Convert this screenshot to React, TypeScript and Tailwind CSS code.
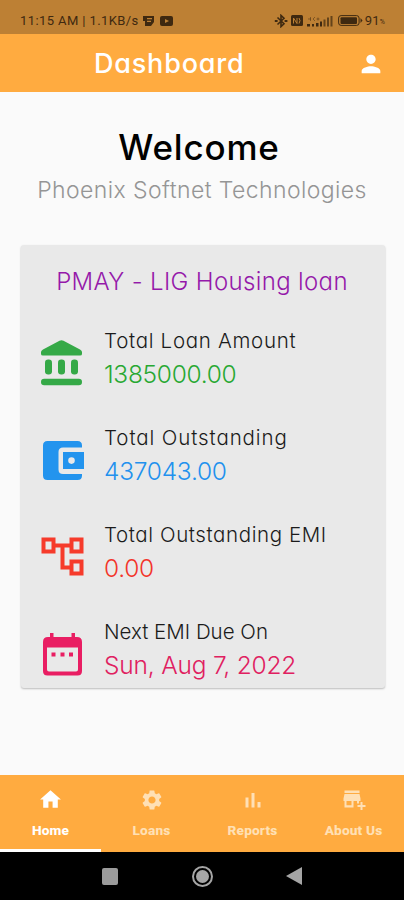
import type { ReactNode } from "react";
import { MdHome, MdPerson, MdSettings } from "react-icons/md";

function BankIcon() {
  return (
    <svg viewBox="0 0 42 46" className="ml-[20px] mt-[15px] h-[46px] w-[42px] shrink-0" fill="#35a947">
      <path d="M0 14V12Q0 10.5 2 9.500L18.500.8Q20.500-.2 22.500.8L39 9.500Q41 10.500 41 12V14Q41 15.500 39 15.500H2Q0 15.500 0 14Z" />
      <rect x="4" y="19.500" width="7" height="15" rx="3.200" />
      <rect x="17" y="19.500" width="7" height="15" rx="3.200" />
      <rect x="30" y="19.500" width="7" height="15" rx="3.200" />
      <rect x="0" y="38.700" width="41" height="6.500" rx="3.200" />
    </svg>
  );
}

function WalletIcon() {
  return (
    <svg viewBox="0 0 42 40" className="ml-[22px] mt-[19px] h-[40px] w-[42px] shrink-0" fill="#2394ee">
      <path d="M4.500 0H34.500Q39 0 39 4.500V6.500H20Q15.500 6.500 15.500 11V28.500Q15.500 33 20 33H39V34.500Q39 39 34.500 39H4.500Q0 39 0 34.500V4.500Q0 0 4.500 0Z" />
      <path fillRule="evenodd" d="M20 11H41V28H20ZM28.500 16.300A3.300 3.300 0 1 0 28.500 22.900A3.300 3.300 0 1 0 28.500 16.300Z" />
    </svg>
  );
}

function TreeIcon() {
  return (
    <svg viewBox="0 0 43 40" className="ml-[20px] mt-[18px] h-[40px] w-[43px] shrink-0" fill="none" stroke="#f63b2b" strokeWidth="4">
      <path d="M2.500 2.500H12.500V14.500H2.500ZM30.500 2.500H40.500V14.500H30.500ZM30.500 24.500H40.500V36.500H30.500Z" />
      <path d="M12.500 8.500H30.500M21.500 8.500V30.500H30.500" />
    </svg>
  );
}

function CalendarIcon() {
  return (
    <svg viewBox="0 0 39 43" className="ml-[22px] mt-[17px] h-[43px] w-[39px] shrink-0" fill="#e91e63">
      <path
        fillRule="evenodd"
        d="M7 0H10.500V4H28.500V0H32V4H34Q39 4 39 9V38Q39 42.500 34.500 42.500H4.500Q0 42.500 0 38V9Q0 4 5 4H7ZM4 14.500V36.500Q4 38.500 6 38.500H33Q35 38.500 35 36.500V14.500Z"
      />
      <path d="M8.500 19.500H12.500V23.500H8.500ZM17.500 19.500H21.500V23.500H17.500ZM26 19.500H30V23.500H26Z" />
    </svg>
  );
}

function StatusBar() {
  return (
    <div className="flex h-[34px] items-center bg-[#bd8034] pl-[20px] pr-[18px] pt-[7px] font-['Roboto',sans-serif] text-[13px] text-[#3f2910]">
      <span className="whitespace-nowrap tracking-[0.4px]">11:15 AM | 1.1KB/s</span>
      <svg viewBox="0 0 12 10" className="ml-[4px] h-[10px] w-[12px]" fill="#3f2910">
        <path fillRule="evenodd" d="M0 0H11V6L8 10H2V5H0ZM4 2V3.200H9V2ZM4 4.700V5.900H8V4.700Z" />
      </svg>
      <svg viewBox="0 0 13 10" className="ml-[5px] h-[10px] w-[13px]">
        <rect width="13" height="10" rx="2" fill="#3f2910" />
        <path d="M5 3L9 5L5 7Z" fill="#bd8034" />
      </svg>
      <div className="ml-auto flex items-center">
        <svg viewBox="0 0 14 14" className="h-[14px] w-[14px]" fill="none" stroke="#3f2910" strokeWidth="1.600">
          <path d="M3.500 3.500L10 9.800L7 12.600V1.400L10 4.200L3.500 10.500" />
          <path d="M.8 7H3.600M10.600 7H13.400" strokeWidth="2.200" />
        </svg>
        <svg viewBox="0 0 12 11" className="ml-[3px] h-[11px] w-[12px]">
          <rect width="12" height="11" rx="1.500" fill="#3f2910" />
          <path d="M2.500 8.500V3L6 8.500V3M8 3Q10 5.500 8 8.500" fill="none" stroke="#bd8034" />
        </svg>
        <svg viewBox="0 0 26 12" className="ml-[4px] h-[12px] w-[26px]" fill="#3f2910">
          <path d="M0 9H3V11.500H0ZM5 9H7V11.500H5ZM9 8H11.500V11.500H9ZM13 6.500H15V11.500H13Z" />
          <path opacity=".7" d="M16.500 4.500H18.500V11.500H16.500ZM20 2.500H22V11.500H20ZM23.500 1H25.500V11.500H23.500Z" />
          <path d="M1 4H4M3.500 2V6M6 4L8 2M6 4L8 6M9.500 4H12.500M11 2.500V5.500" fill="none" stroke="#3f2910" strokeWidth=".8" opacity=".6" />
        </svg>
        <svg viewBox="0 0 25 11" className="ml-[5px] h-[11px] w-[25px]">
          <rect x=".6" y=".6" width="20.500" height="9.800" rx="2.500" fill="none" stroke="#3f2910" strokeWidth="1" />
          <rect x="2.500" y="2.200" width="16.500" height="6.800" rx="1" fill="#3f2910" />
          <path d="M22.500 3V8L24.500 5.500Z" fill="#3f2910" />
        </svg>
        <span className="ml-[2px] text-[13px] leading-none tracking-[0.3px]">91</span>
        <span className="mr-px mt-[4px] text-[7px] leading-none">%</span>
      </div>
    </div>
  );
}

type RowProps = {
  icon: ReactNode;
  label: string;
  value: string;
  labelClass: string;
  valueClass: string;
};

function LoanRow({ icon, label, value, labelClass, valueClass }: RowProps) {
  return (
    <div className="flex h-[97px] items-start">
      <div className="w-[83px] shrink-0">{icon}</div>
      <div className="whitespace-nowrap">
        <p className={`text-[20.5px] leading-[32px] font-light text-[#1b1b1b] ${labelClass}`}>{label}</p>
        <p className={`-mt-px text-[24.5px] leading-[36px] font-light ${valueClass}`}>{value}</p>
      </div>
    </div>
  );
}

function NavItem({ icon, label, active = false }: { icon: ReactNode; label: string; active?: boolean }) {
  return (
    <div
      className={`flex flex-1 flex-col items-center border-b-[3px] pt-[12px] ${
        active ? "border-white text-white" : "border-transparent text-[#ffe0b5]"
      }`}
    >
      <div className="flex h-[25px] items-center">{icon}</div>
      <span className="mt-[9px] whitespace-nowrap text-[13.7px] leading-[18px] font-extrabold tracking-[0.15px]">{label}</span>
    </div>
  );
}

export default function App() {
  return (
    <div className="flex h-[900px] w-[404px] flex-col overflow-hidden bg-[#fafafa] font-['Inter',sans-serif] [font-feature-settings:'cv11']">
      <StatusBar />
      <header className="flex h-[58px] items-center justify-between bg-[#ffab40] pl-[94px] pr-[19px] text-white">
        <h1 className="mt-[2px] text-[27px] font-medium tracking-[0.8px]">Dashboard</h1>
        <MdPerson className="mt-[2px] h-[28px] w-[28px]" />
      </header>

      <main className="flex flex-1 flex-col">
        <h2 className="mt-[31px] pr-[6px] text-center text-[35px] leading-[48px] font-medium tracking-[0.8px] text-black">Welcome</h2>
        <p className="mt-[3px] whitespace-nowrap text-center text-[23px] leading-[32px] font-light tracking-[0.4px] text-[#959595]">
          Phoenix Softnet Technologies
        </p>
        <section className="ml-[21px] mr-[19px] mt-[39px] h-[443px] rounded-[3px] bg-[#e9e9e9] shadow-[0_1px_2px_rgba(0,0,0,0.25)]">
          <h3 className="whitespace-nowrap pr-[2px] pt-[19px] text-center text-[24px] leading-[36px] font-light tracking-[0.35px] text-[#9519aa]">
            PMAY - LIG Housing loan
          </h3>
          <div className="mt-[25px]">
            <LoanRow icon={<BankIcon />} label="Total Loan Amount" value="1385000.00" labelClass="tracking-[0.7px]" valueClass="tracking-[-0.3px] text-[#28a832]" />
            <LoanRow icon={<WalletIcon />} label="Total Outstanding" value="437043.00" labelClass="tracking-[0.9px]" valueClass="tracking-[-0.25px] text-[#2291ee]" />
            <LoanRow icon={<TreeIcon />} label="Total Outstanding EMI" value="0.00" labelClass="tracking-[0.6px]" valueClass="tracking-[-0.3px] text-[#f3352b]" />
            <LoanRow icon={<CalendarIcon />} label="Next EMI Due On" value="Sun, Aug 7, 2022" labelClass="tracking-[0px]" valueClass="tracking-[-0.2px] text-[#e02060]" />
          </div>
        </section>
      </main>

      <nav className="flex h-[77px] bg-[#ffab40] font-['Roboto',sans-serif]">
        <NavItem active label="Home" icon={<MdHome className="h-[25px] w-[25px]" />} />
        <NavItem label="Loans" icon={<MdSettings className="h-[24px] w-[24px]" />} />
        <NavItem
          label="Reports"
          icon={
            <svg viewBox="0 0 16 16" className="h-[16px] w-[16px]" fill="currentColor">
              <path d="M.5 5.500H3.500V15.500H.5ZM6.500 1H9.500V15.500H6.500ZM12.500 10H15.500V15.500H12.500Z" />
            </svg>
          }
        />
        <NavItem
          label="About Us"
          icon={
            <svg viewBox="0 0 24 22" className="h-[22px] w-[24px]" fill="currentColor">
              <path d="M2.500 1.500H17.500V4H2.500Z" />
              <path
                fillRule="evenodd"
                d="M2.500 5H17.500L18.500 9.500V12H17V14.500H15V12H11.500V18.500H2.500V12H1.500V9.500ZM4.500 12V16.200H9.500V12Z"
              />
              <path d="M18.500 13H20.500V16H23.500V18H20.500V21H18.500V18H15.500V16H18.500Z" />
            </svg>
          }
        />
      </nav>

      <div className="flex h-[48px] items-center bg-black">
        <div className="ml-[102px] h-[17px] w-[16px] rounded-[2px] bg-[#9b9b9b]" />
        <div className="ml-[74px] flex h-[21px] w-[21px] items-center justify-center rounded-full border-[2px] border-[#a5a5a5]">
          <div className="h-[13px] w-[13px] rounded-full bg-[#a5a5a5]" />
        </div>
        <svg viewBox="0 0 16 18" className="ml-[73px] h-[18px] w-[16px]" fill="#a5a5a5">
          <path d="M0 9L16 0V18Z" />
        </svg>
      </div>
    </div>
  );
}
